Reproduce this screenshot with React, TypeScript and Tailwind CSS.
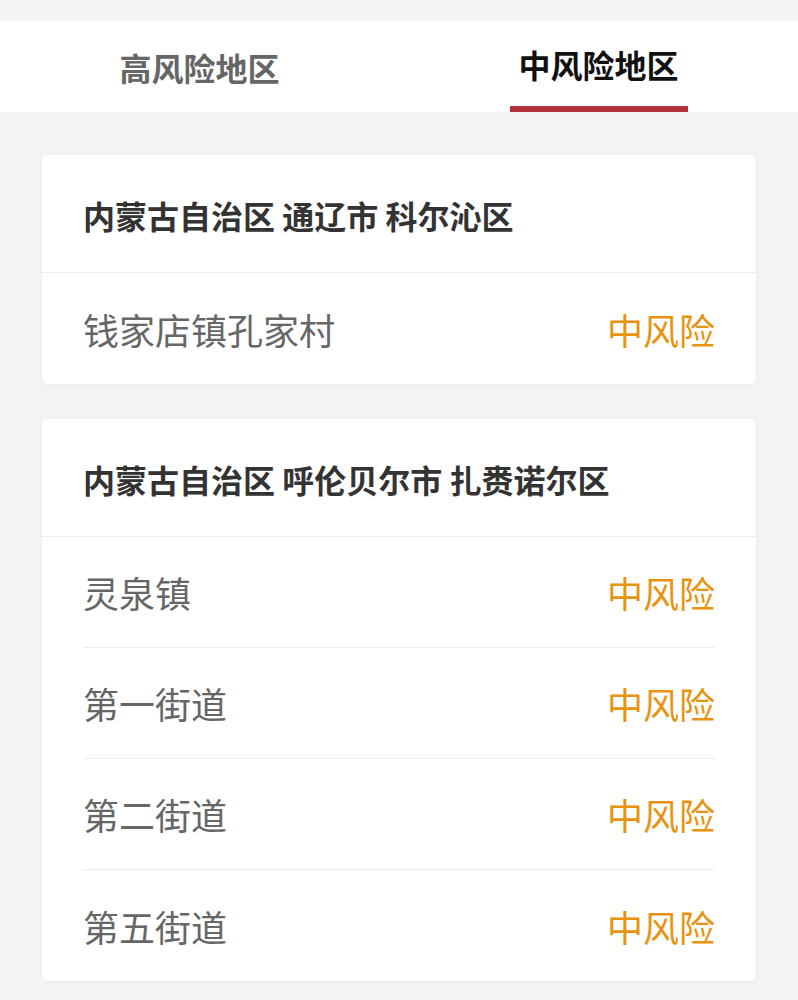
const font = "font-['Noto_Sans_CJK_SC',sans-serif]";

const groups = [
  {
    title: "内蒙古自治区 通辽市 科尔沁区",
    rows: ["钱家店镇孔家村"],
  },
  {
    title: "内蒙古自治区 呼伦贝尔市 扎赉诺尔区",
    rows: ["灵泉镇", "第一街道", "第二街道", "第五街道"],
  },
];

export default function App() {
  return (
    <div className={`${font} min-h-[1000px] w-[798px] bg-[#f2f3f5] pt-[21px]`}>
      {/* Tabs */}
      <div className="flex h-[91px] bg-white">
        <div className="flex flex-1 items-center justify-center">
          <span className="text-[32px] font-bold text-[#666]">高风险地区</span>
        </div>
        <div className="flex flex-1 flex-col items-center justify-end">
          <span className="mb-[18px] text-[32px] font-bold text-[#111]">中风险地区</span>
          <div className="h-[6px] w-[178px] bg-[#b3303d]" />
        </div>
      </div>

      <div className="flex flex-col gap-[35px] px-[42px] pt-[43px]">
        {groups.map((g, gi) => (
          <div key={gi} className="rounded-[6px] bg-white shadow-[0_1px_4px_rgba(0,0,0,0.04)]">
            <div className="flex h-[118px] items-center border-b border-[#ececec] px-[41px] pt-[2px]">
              <span className="text-[32px] font-bold text-[#333]">{g.title}</span>
            </div>
            <div className="px-[41px]">
              {g.rows.map((r, ri) => (
                <div
                  key={ri}
                  className={`flex h-[111px] items-center justify-between ${
                    ri < g.rows.length - 1 ? "border-b border-[#ececec]" : ""
                  }`}
                >
                  <span className="text-[36px] text-[#666]">{r}</span>
                  <span className="text-[36px] text-[#e8930f]">中风险</span>
                </div>
              ))}
            </div>
          </div>
        ))}
      </div>
    </div>
  );
}
